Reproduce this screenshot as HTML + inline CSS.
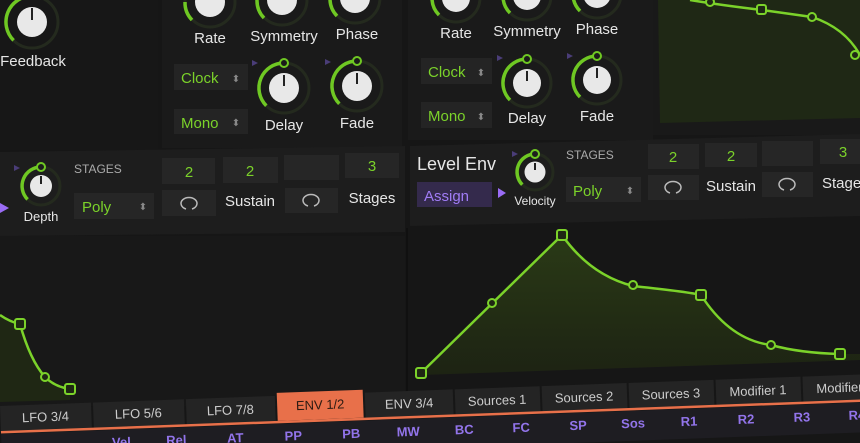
<!DOCTYPE html>
<html><head><meta charset="utf-8"><style>
html,body{margin:0;padding:0;background:#151515;width:860px;height:443px;overflow:hidden}
svg{display:block}
text{font-family:"Liberation Sans",sans-serif}
</style></head><body>
<svg width="860" height="443" viewBox="0 0 860 443" xmlns="http://www.w3.org/2000/svg">
<defs>
<linearGradient id="gf" x1="0" y1="0" x2="0" y2="1"><stop offset="0" stop-color="#2a3a16"/><stop offset="1" stop-color="#1d2313"/></linearGradient>
</defs>
<rect width="860" height="443" fill="#161616"/>
<rect x="0" y="0" width="158" height="150" fill="#171717"/>
<rect x="162" y="0" width="240" height="148" fill="#1a1a1a"/>
<rect x="408" y="0" width="245" height="140" fill="#1a1a1a"/>
<rect x="653" y="0" width="207" height="135" fill="#191919"/>
<path d="M658 0 L860 0 L860 118 L660 123 Z" fill="#1f2815"/>
<path d="M690 0 Q720 5 762 10 L812 17 Q845 28 860 55" fill="none" stroke="#7bd22a" stroke-width="2.5"/>
<circle cx="710" cy="2" r="4" fill="#1f2815" stroke="#7bd22a" stroke-width="2"/>
<rect x="757" y="5" width="9" height="9" rx="2" fill="#1f2815" stroke="#7bd22a" stroke-width="2"/>
<circle cx="812" cy="17" r="4" fill="#1f2815" stroke="#7bd22a" stroke-width="2"/>
<circle cx="855" cy="55" r="4" fill="#1f2815" stroke="#7bd22a" stroke-width="2"/>

<g fill="none">
<circle cx="32" cy="22" r="26" stroke="#242a1e" stroke-width="3"/>
<path d="M13.6 40.4 A26 26 0 0 1 32 -4" stroke="#6fc823" stroke-width="3.5"/>
<circle cx="32" cy="22" r="15" fill="#e8e8e8"/><line x1="32" y1="8" x2="32" y2="20" stroke="#222" stroke-width="2"/>
<circle cx="210" cy="2" r="25" stroke="#242a1e" stroke-width="3"/><path d="M192 20 A25 25 0 0 1 185 2" stroke="#6fc823" stroke-width="3.5"/><circle cx="210" cy="2" r="15" fill="#e8e8e8"/>
<circle cx="282" cy="0" r="25" stroke="#242a1e" stroke-width="3"/><path d="M264 18 A25 25 0 0 1 257 0" stroke="#6fc823" stroke-width="3.5"/><circle cx="282" cy="0" r="15" fill="#e8e8e8"/>
<circle cx="355" cy="-2" r="25" stroke="#242a1e" stroke-width="3"/><path d="M337 16 A25 25 0 0 1 330 -2" stroke="#6fc823" stroke-width="3.5"/><circle cx="355" cy="-2" r="15" fill="#e8e8e8"/>
<circle cx="456" cy="-2" r="24" stroke="#242a1e" stroke-width="3"/><path d="M439 15 A24 24 0 0 1 432 -2" stroke="#6fc823" stroke-width="3.5"/><circle cx="456" cy="-2" r="14" fill="#e8e8e8"/>
<circle cx="527" cy="-4" r="24" stroke="#242a1e" stroke-width="3"/><path d="M510 13 A24 24 0 0 1 503 -4" stroke="#6fc823" stroke-width="3.5"/><circle cx="527" cy="-4" r="14" fill="#e8e8e8"/>
<circle cx="597" cy="-6" r="24" stroke="#242a1e" stroke-width="3"/><path d="M580 11 A24 24 0 0 1 573 -6" stroke="#6fc823" stroke-width="3.5"/><circle cx="597" cy="-6" r="14" fill="#e8e8e8"/>
<circle cx="284" cy="88" r="25" stroke="#242a1e" stroke-width="3"/><path d="M266.3 105.7 A25 25 0 0 1 284 63" stroke="#6fc823" stroke-width="3.5"/><circle cx="284" cy="88" r="15" fill="#e8e8e8"/><line x1="284" y1="75" x2="284" y2="86" stroke="#222" stroke-width="2"/><circle cx="284" cy="63" r="4" fill="#1a1a1a" stroke="#6fc823" stroke-width="2"/>
<circle cx="357" cy="86" r="25" stroke="#242a1e" stroke-width="3"/><path d="M339.3 103.7 A25 25 0 0 1 357 61" stroke="#6fc823" stroke-width="3.5"/><circle cx="357" cy="86" r="15" fill="#e8e8e8"/><line x1="357" y1="73" x2="357" y2="84" stroke="#222" stroke-width="2"/><circle cx="357" cy="61" r="4" fill="#1a1a1a" stroke="#6fc823" stroke-width="2"/>
<circle cx="527" cy="83" r="24" stroke="#242a1e" stroke-width="3"/><path d="M510 100 A24 24 0 0 1 527 59" stroke="#6fc823" stroke-width="3.5"/><circle cx="527" cy="83" r="14" fill="#e8e8e8"/><line x1="527" y1="71" x2="527" y2="81" stroke="#222" stroke-width="2"/><circle cx="527" cy="59" r="4" fill="#1a1a1a" stroke="#6fc823" stroke-width="2"/>
<circle cx="597" cy="80" r="24" stroke="#242a1e" stroke-width="3"/><path d="M580 97 A24 24 0 0 1 597 56" stroke="#6fc823" stroke-width="3.5"/><circle cx="597" cy="80" r="14" fill="#e8e8e8"/><line x1="597" y1="68" x2="597" y2="78" stroke="#222" stroke-width="2"/><circle cx="597" cy="56" r="4" fill="#1a1a1a" stroke="#6fc823" stroke-width="2"/>
</g>
<g fill="#e6e6e6" font-size="15" text-anchor="middle">
<text x="33" y="66">Feedback</text>
<text x="210" y="43">Rate</text><text x="284" y="41">Symmetry</text><text x="357" y="39">Phase</text>
<text x="284" y="130">Delay</text><text x="357" y="128">Fade</text>
<text x="456" y="38">Rate</text><text x="527" y="36">Symmetry</text><text x="597" y="34">Phase</text>
<text x="527" y="123">Delay</text><text x="597" y="121">Fade</text>
</g>
<g>
<rect x="174" y="64" width="74" height="26" fill="#242424"/><text x="181" y="83" fill="#7bd22a" font-size="15">Clock</text><text x="236" y="82" fill="#888" font-size="10" text-anchor="middle">⬍</text>
<rect x="174" y="109" width="74" height="25" fill="#242424"/><text x="181" y="128" fill="#7bd22a" font-size="15">Mono</text><text x="236" y="126" fill="#888" font-size="10" text-anchor="middle">⬍</text>
<rect x="421" y="58" width="71" height="26" fill="#242424"/><text x="428" y="77" fill="#7bd22a" font-size="15">Clock</text><text x="481" y="76" fill="#888" font-size="10" text-anchor="middle">⬍</text>
<rect x="421" y="102" width="71" height="26" fill="#242424"/><text x="428" y="121" fill="#7bd22a" font-size="15">Mono</text><text x="481" y="120" fill="#888" font-size="10" text-anchor="middle">⬍</text>
<path d="M252 60 l6 3 l-6 3z M325 59 l6 3 l-6 3z M497 55 l6 3 l-6 3z M567 53 l6 3 l-6 3z" fill="#4a3d78"/>
</g>
<path d="M0 152 L405 146 L405 232 L0 236 Z" fill="#1d1d1d"/>
<path d="M410 146 L860 134 L860 216 L410 226 Z" fill="#1d1d1d"/>
<circle cx="41" cy="186" r="19" fill="none" stroke="#242a1e" stroke-width="3"/><path d="M27.6 199.4 A19 19 0 0 1 41 167" fill="none" stroke="#6fc823" stroke-width="3.5"/><circle cx="41" cy="186" r="11" fill="#e8e8e8"/><line x1="41" y1="176" x2="41" y2="184" stroke="#222" stroke-width="2"/><circle cx="41" cy="167" r="4" fill="#1d1d1d" stroke="#6fc823" stroke-width="2"/>
<path d="M14 165 l6 3 l-6 3z" fill="#4a3d78"/><path d="M0 203 l9 5 l-9 5z" fill="#9a6cf5"/>
<text x="41" y="221" fill="#e6e6e6" font-size="13" text-anchor="middle">Depth</text>
<text x="74" y="173" fill="#aaa" font-size="12">STAGES</text>
<rect x="162" y="158" width="53" height="26" fill="#262626"/><text x="189" y="177" fill="#7bd22a" font-size="15" text-anchor="middle">2</text>
<rect x="223" y="157" width="55" height="26" fill="#262626"/><text x="250" y="176" fill="#7bd22a" font-size="15" text-anchor="middle">2</text>
<rect x="284" y="155" width="55" height="25" fill="#262626"/>
<rect x="345" y="153" width="54" height="25" fill="#262626"/><text x="372" y="171" fill="#7bd22a" font-size="15" text-anchor="middle">3</text>
<rect x="74" y="193" width="80" height="26" fill="#262626"/><text x="82" y="212" fill="#7bd22a" font-size="15">Poly</text><text x="143" y="210" fill="#888" font-size="10" text-anchor="middle">⬍</text>
<rect x="162" y="190" width="54" height="26" fill="#262626"/><path d="M186 209 A8 6 0 1 1 192 209" fill="none" stroke="#bbb" stroke-width="1.5"/>
<text x="250" y="206" fill="#e6e6e6" font-size="15" text-anchor="middle">Sustain</text>
<rect x="285" y="188" width="53" height="25" fill="#262626"/><path d="M308 206 A8 6 0 1 1 314 206" fill="none" stroke="#bbb" stroke-width="1.5"/>
<text x="372" y="203" fill="#e6e6e6" font-size="15" text-anchor="middle">Stages</text>
<text x="417" y="170" fill="#e6e6e6" font-size="18">Level Env</text>
<rect x="417" y="182" width="75" height="25" fill="#342a4c"/><text x="424" y="201" fill="#a07cf5" font-size="15">Assign</text>
<path d="M498 188 l8 5 l-8 5z" fill="#9a6cf5"/><path d="M512 151 l6 3 l-6 3z" fill="#4a3d78"/>
<circle cx="535" cy="172" r="18" fill="none" stroke="#242a1e" stroke-width="3"/><path d="M522.3 184.7 A18 18 0 0 1 535 154" fill="none" stroke="#6fc823" stroke-width="3.5"/><circle cx="535" cy="172" r="10.5" fill="#e8e8e8"/><line x1="535" y1="163" x2="535" y2="170" stroke="#222" stroke-width="2"/><circle cx="535" cy="154" r="4" fill="#1d1d1d" stroke="#6fc823" stroke-width="2"/>
<text x="535" y="205" fill="#e6e6e6" font-size="12" text-anchor="middle">Velocity</text>
<text x="566" y="159" fill="#aaa" font-size="12">STAGES</text>
<rect x="648" y="144" width="51" height="25" fill="#262626"/><text x="673" y="162" fill="#7bd22a" font-size="15" text-anchor="middle">2</text>
<rect x="705" y="143" width="52" height="24" fill="#262626"/><text x="731" y="161" fill="#7bd22a" font-size="15" text-anchor="middle">2</text>
<rect x="762" y="141" width="51" height="25" fill="#262626"/>
<rect x="820" y="139" width="40" height="25" fill="#262626"/><text x="843" y="157" fill="#7bd22a" font-size="15" text-anchor="middle">3</text>
<rect x="566" y="177" width="75" height="25" fill="#262626"/><text x="573" y="196" fill="#7bd22a" font-size="15">Poly</text><text x="630" y="194" fill="#888" font-size="10" text-anchor="middle">⬍</text>
<rect x="648" y="175" width="51" height="25" fill="#262626"/><path d="M670 193 A8 6 0 1 1 676 193" fill="none" stroke="#bbb" stroke-width="1.5"/>
<text x="731" y="191" fill="#e6e6e6" font-size="15" text-anchor="middle">Sustain</text>
<rect x="762" y="172" width="51" height="25" fill="#262626"/><path d="M784 190 A8 6 0 1 1 790 190" fill="none" stroke="#bbb" stroke-width="1.5"/>
<text x="822" y="188" fill="#e6e6e6" font-size="15">Stages</text>
<rect x="0" y="236" width="405" height="170" fill="#181818"/>
<line x1="407" y1="228" x2="407" y2="400" stroke="#101010" stroke-width="2"/>
<path d="M0 315 Q10 322 20 324 Q30 360 45 377 Q55 387 70 389 L70 400 L0 402 Z" fill="#1f2714"/>
<path d="M0 315 Q10 322 20 324 Q30 360 45 377 Q55 387 70 389" fill="none" stroke="#7bd22a" stroke-width="2.5"/>
<rect x="15" y="319" width="10" height="10" rx="2" fill="#1f2714" stroke="#7bd22a" stroke-width="2"/>
<circle cx="45" cy="377" r="4" fill="#1f2714" stroke="#7bd22a" stroke-width="2"/>
<rect x="65" y="384" width="10" height="10" rx="2" fill="#1f2714" stroke="#7bd22a" stroke-width="2"/>
<path d="M421 373 L562 235 Q590 275 633 286 Q690 292 701 295 Q730 340 771 345 Q800 353 840 354 L860 354 L860 360 L421 375 Z" fill="url(#gf)"/>
<path d="M421 373 L562 235 Q590 275 633 286 Q690 292 701 295 Q730 340 771 345 Q800 353 840 354" fill="none" stroke="#7bd22a" stroke-width="2.5"/>
<rect x="416" y="368" width="10" height="10" rx="2" fill="#1f2714" stroke="#7bd22a" stroke-width="2"/>
<circle cx="492" cy="303" r="4" fill="#1f2714" stroke="#7bd22a" stroke-width="2"/>
<rect x="557" y="230" width="10" height="10" rx="2" fill="#1f2714" stroke="#7bd22a" stroke-width="2"/>
<circle cx="633" cy="285" r="4" fill="#1f2714" stroke="#7bd22a" stroke-width="2"/>
<rect x="696" y="290" width="10" height="10" rx="2" fill="#1f2714" stroke="#7bd22a" stroke-width="2"/>
<circle cx="771" cy="345" r="4" fill="#1f2714" stroke="#7bd22a" stroke-width="2"/>
<rect x="835" y="349" width="10" height="10" rx="2" fill="#1f2714" stroke="#7bd22a" stroke-width="2"/>
<g transform="translate(0,406) rotate(-2.1)" font-size="13" text-anchor="middle">
<rect x="0" y="0" width="91" height="25" fill="#242424"/><text x="45" y="17" fill="#ccc">LFO 3/4</text>
<rect x="93" y="0" width="91" height="25" fill="#242424"/><text x="138" y="17" fill="#ccc">LFO 5/6</text>
<rect x="186" y="0" width="89" height="25" fill="#242424"/><text x="230" y="17" fill="#ccc">LFO 7/8</text>
<rect x="277" y="-3" width="86" height="28" fill="#e8704a"/><text x="320" y="15" fill="#2a1a12">ENV 1/2</text>
<rect x="365" y="0" width="88" height="25" fill="#242424"/><text x="409" y="17" fill="#ccc">ENV 3/4</text>
<rect x="455" y="0" width="85" height="25" fill="#242424"/><text x="497" y="17" fill="#ccc">Sources 1</text>
<rect x="542" y="0" width="85" height="25" fill="#242424"/><text x="584" y="17" fill="#ccc">Sources 2</text>
<rect x="629" y="0" width="85" height="25" fill="#242424"/><text x="671" y="17" fill="#ccc">Sources 3</text>
<rect x="716" y="0" width="85" height="25" fill="#242424"/><text x="758" y="17" fill="#ccc">Modifier 1</text>
<rect x="803" y="0" width="85" height="25" fill="#242424"/><text x="845" y="17" fill="#ccc">Modifier 2</text>
<rect x="0" y="25" width="900" height="2.5" fill="#e8704a"/>
<rect x="0" y="28" width="900" height="30" fill="#1e1d22"/>
<g fill="#9274ea" font-weight="bold" font-size="13">
<text x="120" y="45">Vel</text><text x="175" y="45">Rel</text><text x="234" y="45">AT</text><text x="292" y="45">PP</text><text x="350" y="45">PB</text><text x="407" y="45">MW</text><text x="463" y="45">BC</text><text x="520" y="45">FC</text><text x="577" y="45">SP</text><text x="632" y="45">Sos</text><text x="688" y="45">R1</text><text x="745" y="45">R2</text><text x="801" y="45">R3</text><text x="856" y="45">R4</text>
</g>
</g>
</svg>
</body></html>
